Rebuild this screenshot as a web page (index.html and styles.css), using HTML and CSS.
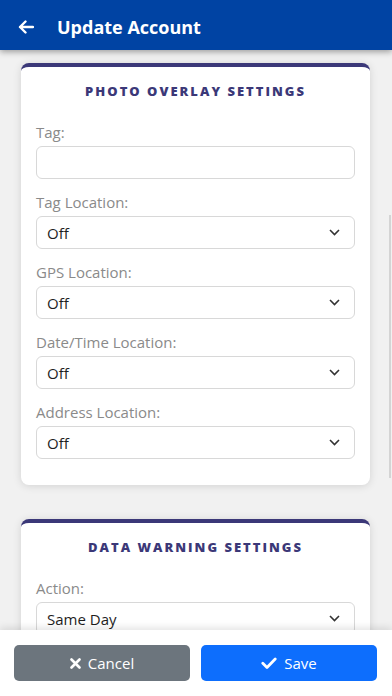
FILE: index.html
```html
<!DOCTYPE html>
<html lang="en">
<head>
  <meta charset="UTF-8" />
  <title>Update Account</title>
  <meta name="viewport" content="width=device-width, initial-scale=1.0"/>
  <link rel="stylesheet" href="styles.css">
</head>
<body>
  <div class="topo">
    <svg class="voltar" width="16" height="14" viewBox="0 0 16 14">
      <path d="M15 7H2M7.5 1.5L2 7l5.5 5.5" fill="none" stroke="#fff" stroke-width="2.4" stroke-linecap="round" stroke-linejoin="round"/>
    </svg>
    <h1>Update Account</h1>
  </div>

  <div class="conteudo">
    <div class="barra-rolagem"></div>

    <div class="cartao">
      <h2>PHOTO OVERLAY SETTINGS</h2>
      <div class="campo">
        <label>Tag:</label>
        <div class="entrada"></div>
      </div>
      <div class="campo">
        <label>Tag Location:</label>
        <div class="entrada selecao"><span>Off</span><svg width="11" height="7" viewBox="0 0 11 7"><path d="M1 1l4.5 4.5L10 1" fill="none" stroke="#333" stroke-width="1.6"/></svg></div>
      </div>
      <div class="campo">
        <label>GPS Location:</label>
        <div class="entrada selecao"><span>Off</span><svg width="11" height="7" viewBox="0 0 11 7"><path d="M1 1l4.5 4.5L10 1" fill="none" stroke="#333" stroke-width="1.6"/></svg></div>
      </div>
      <div class="campo">
        <label>Date/Time Location:</label>
        <div class="entrada selecao"><span>Off</span><svg width="11" height="7" viewBox="0 0 11 7"><path d="M1 1l4.5 4.5L10 1" fill="none" stroke="#333" stroke-width="1.6"/></svg></div>
      </div>
      <div class="campo">
        <label>Address Location:</label>
        <div class="entrada selecao"><span>Off</span><svg width="11" height="7" viewBox="0 0 11 7"><path d="M1 1l4.5 4.5L10 1" fill="none" stroke="#333" stroke-width="1.6"/></svg></div>
      </div>
    </div>

    <div class="cartao">
      <h2>DATA WARNING SETTINGS</h2>
      <div class="campo">
        <label>Action:</label>
        <div class="entrada selecao"><span>Same Day</span><svg width="11" height="7" viewBox="0 0 11 7"><path d="M1 1l4.5 4.5L10 1" fill="none" stroke="#333" stroke-width="1.6"/></svg></div>
      </div>
    </div>
  </div>

  <div class="rodape">
    <button class="cancelar">
      <svg width="11" height="11" viewBox="0 0 11 11"><path d="M1.5 1.5l8 8M9.5 1.5l-8 8" stroke="#fff" stroke-width="2.6" stroke-linecap="round"/></svg>
      Cancel
    </button>
    <button class="salvar">
      <svg width="16" height="12" viewBox="0 0 16 12"><path d="M1.8 6.2l4.2 4.2L14.2 2" fill="none" stroke="#fff" stroke-width="2.8" stroke-linecap="round" stroke-linejoin="round"/></svg>
      Save
    </button>
  </div>
</body>
</html>
```

FILE: styles.css
```css
* {
  box-sizing: border-box;
}
body {
  font-family: "Open Sans", Arial, sans-serif;
  margin: 0;
  padding: 0;
  height: 696px;
  display: flex;
  flex-direction: column;
  background: #f1f1f1;
  color: #222;
  overflow: hidden;
}
.topo {
  height: 50px;
  flex-shrink: 0;
  display: flex;
  align-items: center;
  padding: 3px 0 0 18px;
  background: #0043a3;
  box-shadow: 0 2px 6px rgba(0,0,0,0.35);
  position: relative;
  z-index: 2;
}
.topo h1 {
  margin: 0 0 0 23px;
  font-size: 18px;
  font-weight: 700;
  color: #fff;
}
.conteudo {
  flex: 1;
  overflow: hidden;
  padding: 13px 22px 0 21px;
  position: relative;
}
.barra-rolagem {
  position: absolute;
  right: 1px;
  top: 165px;
  width: 2px;
  height: 263px;
  background: #d4d4d4;
}
.cartao {
  background: #fff;
  border-top: 4px solid #3b3878;
  border-radius: 8px;
  box-shadow: 0 1px 8px rgba(0,0,0,0.13);
  padding: 14px 15px 13px;
  margin-bottom: 34px;
}
.cartao h2 {
  margin: 0 0 21px;
  text-align: center;
  font-size: 13px;
  line-height: 20px;
  font-weight: 800;
  letter-spacing: 2px;
  color: #3b3878;
}
.campo {
  margin-bottom: 13px;
}
.campo label {
  display: block;
  font-size: 15px;
  line-height: 21px;
  margin-bottom: 3px;
  color: #8a8a8a;
}
.entrada {
  height: 33px;
  border: 1px solid #d8d8d8;
  border-radius: 6px;
  background: #fff;
}
.selecao {
  display: flex;
  align-items: center;
  justify-content: space-between;
  padding: 0 14px 0 10px;
  font-size: 15px;
  color: #1e1e1e;
}
.rodape {
  height: 66px;
  flex-shrink: 0;
  display: flex;
  gap: 11px;
  padding: 15px 15px 0 14px;
  background: #fff;
  box-shadow: 0 -2px 8px rgba(0,0,0,0.12);
  position: relative;
  z-index: 2;
}
.rodape button {
  flex: 1;
  height: 36px;
  border: none;
  border-radius: 5px;
  color: #fff;
  font-family: inherit;
  font-size: 15px;
  display: flex;
  align-items: center;
  justify-content: center;
  gap: 7px;
}
.cancelar {
  background: #6c757d;
}
.salvar {
  background: #0d6efd;
}
```
